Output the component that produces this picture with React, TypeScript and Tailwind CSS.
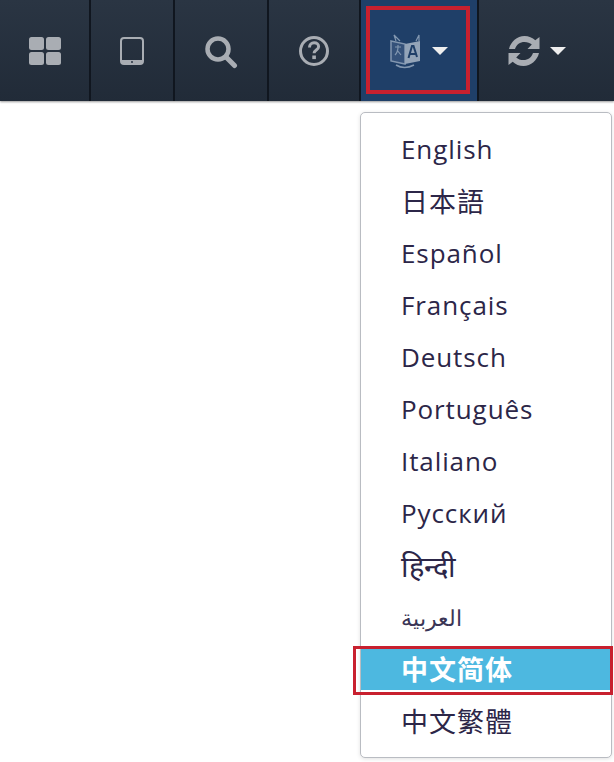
import type { ReactNode } from 'react';

const languages = ['English', '日本語', 'Español', 'Français', 'Deutsch', 'Português', 'Italiano', 'Русский', 'हिन्दी', 'العربية', '中文简体', '中文繁體'];

function NavCell({ width, active, children }: { width: string; active?: boolean; children: ReactNode }) {
  return (
    <div className={`${width} relative flex h-full shrink-0 items-center justify-center border-r-2 border-[#10161f] ${active ? 'bg-[#1f3f68]' : ''}`}>
      {children}
    </div>
  );
}

function Caret() {
  return <span className="ml-[10px] h-0 w-0 border-x-[8px] border-t-[8px] border-x-transparent border-t-[#eeeeee]" />;
}

function langClass(lang: string) {
  if (lang === '中文简体') return 'font-bold text-white tracking-[1px] text-[27px]';
  if (lang === '日本語' || lang === '中文繁體') return 'text-[#2c2648] tracking-[1px] text-[27px]';
  if (lang === 'العربية') return 'text-[#3a3555] text-[22px]';
  if (lang === 'हिन्दी') return 'text-[#2c2648] text-[29px]';
  return 'text-[#2c2648] text-[26px] tracking-[0.9px]';
}

export default function App() {
  return (
    <div className="relative h-[762px] w-[614px] overflow-hidden bg-white font-['Open_Sans',sans-serif]">
      <div className="flex h-[101px] bg-gradient-to-b from-[#2a3543] to-[#212b38] shadow-[0_1px_2px_rgba(0,0,0,0.4)]">
        <NavCell width="w-[91px]">
          <svg width="34" height="30" viewBox="0 0 34 30" fill="#a9adb3">
            <rect x="1" y="1" width="15" height="13" rx="2.5" />
            <rect x="18" y="1" width="15" height="13" rx="2.5" />
            <rect x="1" y="16" width="15" height="13" rx="2.5" />
            <rect x="18" y="16" width="15" height="13" rx="2.5" />
          </svg>
        </NavCell>
        <NavCell width="w-[84px]">
          <svg width="24" height="28" viewBox="0 0 24 28" className="mr-[1px]">
            <rect x="1" y="1" width="22" height="26" rx="3" fill="none" stroke="#a9adb3" strokeWidth="2" />
            <rect x="1" y="23" width="22" height="4" fill="#a9adb3" />
            <circle cx="12" cy="25" r="1" fill="#2a3543" />
          </svg>
        </NavCell>
        <NavCell width="w-[94px]">
          <svg width="34" height="34" viewBox="0 0 34 34" fill="none" stroke="#a9adb3" className="mt-[2px]">
            <circle cx="14" cy="14" r="10.5" strokeWidth="4.5" />
            <path d="M22 22l8.5 8.5" strokeWidth="5" strokeLinecap="round" />
          </svg>
        </NavCell>
        <NavCell width="w-[92px]">
          <svg width="32" height="32" viewBox="0 0 32 32" fill="none">
            <circle cx="16" cy="16" r="13.5" stroke="#a9adb3" strokeWidth="3" />
            <path d="M11.5 12.5c0-3 2-4.700 4.600-4.700 2.700 0 4.500 1.600 4.500 3.900 0 3.300-4.500 3.400-4.500 6.500" stroke="#a9adb3" strokeWidth="3" />
            <rect x="14.300" y="20.500" width="3.600" height="3.600" fill="#a9adb3" />
          </svg>
        </NavCell>
        <NavCell width="w-[118px]" active>
          <svg width="32" height="36" viewBox="0 0 32 36">
            <path d="M1 8l14 3v20L1 28z" fill="#35527a" stroke="#8297b0" strokeWidth="1.500" />
            <path d="M15 11l15-3v20l-15 3z" fill="#93a4b8" />
            <path d="M6 8L4 2l6 6M26 8l3-6v6" fill="none" stroke="#8297b0" strokeWidth="1.200" />
            <path d="M6 32c5 3 12 3 18 0" fill="none" stroke="#8297b0" strokeWidth="1.500" />
            <path d="M18.500 25l3.500-12h1.500l3.500 11M20 21h5.500" fill="none" stroke="#1f3f68" strokeWidth="2" />
            <path d="M5 14h6M8 12v2c0 4-2 7-3 8M7 17l4 5" fill="none" stroke="#8297b0" strokeWidth="1.200" />
          </svg>
          <Caret />
          <div className="absolute left-[5px] top-[6px] h-[88px] w-[104px] border-[4px] border-[#c8202f]" />
        </NavCell>
        <div className="flex h-full flex-1 items-center pl-[29px]">
          <svg width="32" height="32" viewBox="0 0 32 32" fill="#a9adb3">
            <path d="M31.500 2v12H19.500l4.300-4.400C22 8 19.500 7 16.500 7 12 7 8.500 9.500 7 14H1C2.700 6.800 9 1 16.500 1c4.200 0 8 1.600 10.800 4.300z" />
            <path d="M.5 30V18h12l-4.300 4.400c1.800 1.600 4.300 2.600 7.300 2.600 4.500 0 8-2.500 9.500-7h6c-1.700 7.200-8 13-15.500 13-4.200 0-8-1.600-10.800-4.300z" />
          </svg>
          <Caret />
        </div>
      </div>

      <div className="absolute left-[360px] top-[112px] h-[646px] w-[252px] rounded-[5px] border border-[#b9bcc2] bg-white py-[10px] shadow-[0_1px_4px_rgba(0,0,0,0.12)]">
        {languages.map((lang) => (
          <div key={lang} className="flex h-[52px] items-center">
            <div className={`flex h-[42px] w-full items-center pl-[40px] leading-none ${lang === '中文简体' ? 'bg-[#4db8e0]' : ''} ${langClass(lang)}`} style={{ fontFamily: '"Open Sans", "Noto Sans CJK SC", sans-serif' }}>
              {lang}
            </div>
          </div>
        ))}
        <div className="absolute left-[-8px] top-[533px] h-[49px] w-[260px] border-[3px] border-[#c8202f]" />
      </div>
    </div>
  );
}
